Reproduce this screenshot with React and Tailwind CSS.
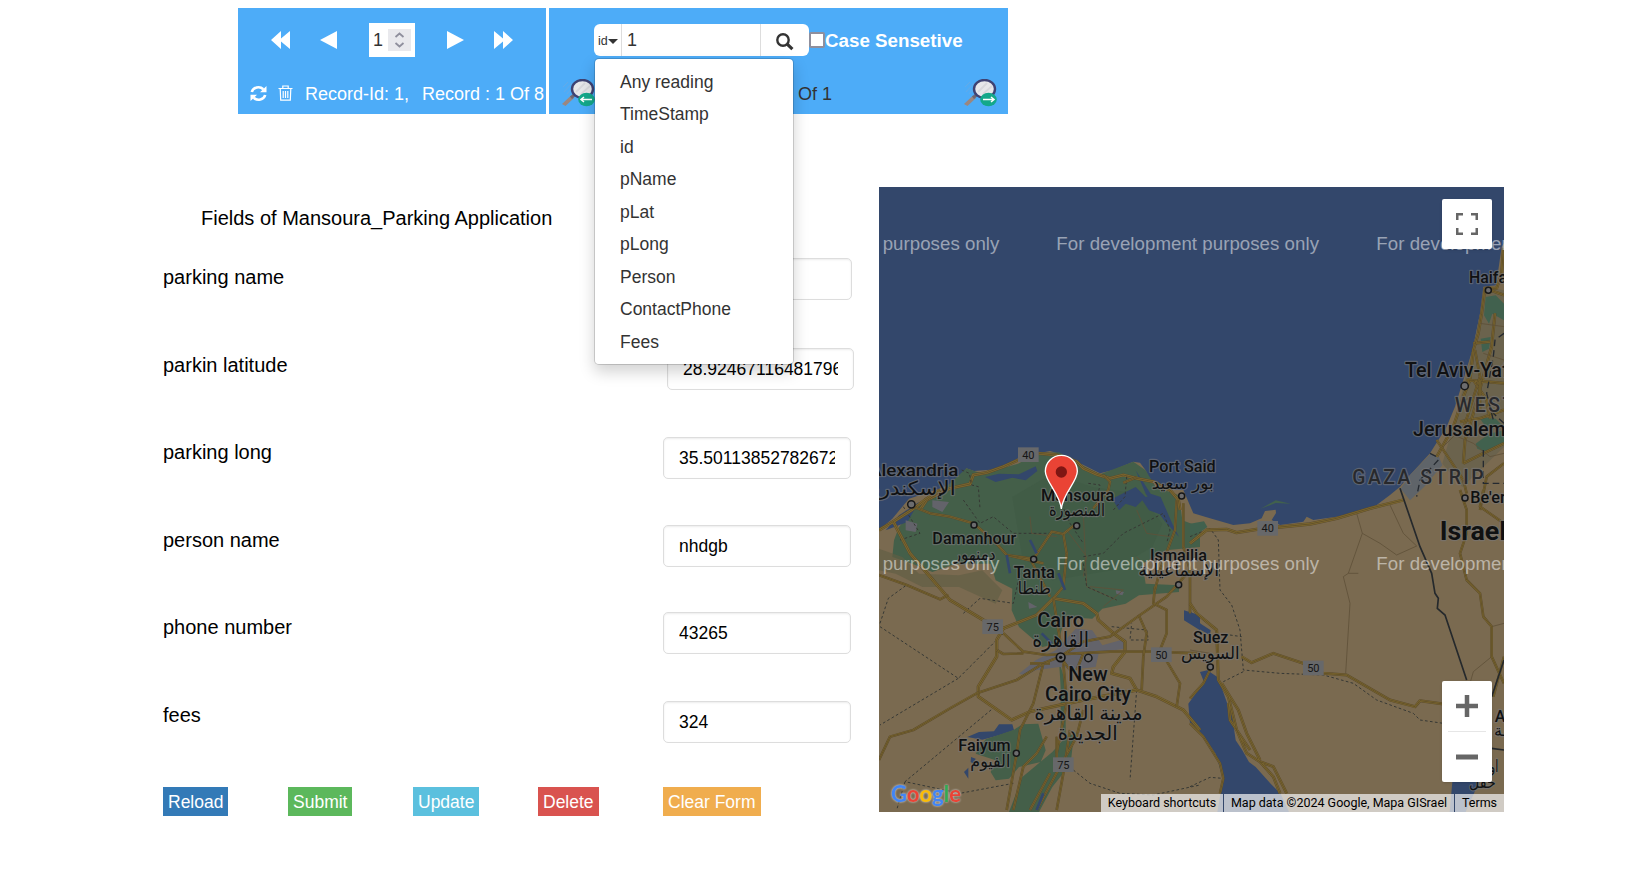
import React from "react";

const fields = [
  { label: "parking name", value: "", row: "h-[90px]", lab: "pt-[5px]", box: "w-[189px]" },
  { label: "parkin latitude", value: "28.924671164817963", row: "h-[89px]", lab: "pt-[3px]", box: "w-[187px] ml-1" },
  { label: "parking long", value: "35.501138527826725", row: "h-[88px]", lab: "pt-px", box: "w-[188px]" },
  { label: "person name", value: "nhdgb", row: "h-[87px]", lab: "pt-px", box: "w-[188px]" },
  { label: "phone number", value: "43265", row: "h-[89px]", lab: "pt-px", box: "w-[188px]" },
  { label: "fees", value: "324", row: "h-[86px]", lab: "", box: "w-[188px]" },
];

const menu = ["Any reading", "TimeStamp", "id", "pName", "pLat", "pLong", "Person", "ContactPhone", "Fees"];

const buttons = [
  ["Reload", "bg-[#337ab7]"],
  ["Submit", "bg-[#5cb85c]"],
  ["Update", "bg-[#5bc0de]"],
  ["Delete", "bg-[#d9534f]"],
  ["Clear Form", "bg-[#f0ad4e]"],
];

function Lens({ right }) {
  return (
    <svg className="h-[28px] w-[34px] shrink-0" viewBox="0 0 34 28">
      <path d="M3 13 L11 4 M6 15 L14 6 M2 8 L7 3" stroke="#74a9dc" strokeWidth="1" opacity=".6" />
      <path d="M1 25 L10 16.500 L13 19 L4.500 27Z" fill="#9b8780" />
      <path d="M9 17.500 L12 15 L14 17.500 L11 20Z" fill="#6f6672" />
      <ellipse cx="21.500" cy="10" rx="10.500" ry="9" fill="#e7e7ea" stroke="#3e4273" strokeWidth="2.400" />
      <path d="M15 13 L24 4 M20 15 L29 7" stroke="#d8d8dc" strokeWidth="1.800" />
      <ellipse cx="25.500" cy="20.500" rx="8.300" ry="6.700" fill="#14a88a" />
      <path d={right ? "M20 20.500 H31 M28 18 L31 20.500 L28 23" : "M31 20.500 H20 M23 18 L20 20.500 L23 23"} stroke="#fff" strokeWidth="1.500" fill="none" />
    </svg>
  );
}

function Road({ d, w = 8 }) {
  return (
    <g fill="none" strokeLinejoin="round">
      <path d={d} stroke="#5a4b2b" strokeWidth={w + 2} />
      <path d={d} stroke="#806a30" strokeWidth={w - 1} />
      <path d={d} stroke="#5d4d28" strokeWidth="2.500" />
    </g>
  );
}

function Minor({ d }) {
  return <path d={d} fill="none" stroke="#5f5138" strokeWidth="2.500" />;
}

function Dashed({ d }) {
  return <path d={d} fill="none" stroke="#363834" strokeWidth="3" strokeDasharray="8 7" />;
}

function Shield({ x, y, n }) {
  return (
    <g>
      <rect x={x - 31} y={y - 22} width="62" height="44" fill="#67686a" />
      <text x={x} y={y + 12} textAnchor="middle" fontSize="33" fill="#161616">{n}</text>
    </g>
  );
}

function Label({ x, y, w, size = 48, fill = "#101112", weight = 500, adjust = "spacingAndGlyphs", children }) {
  return (
    <text x={x} y={y} textLength={w} lengthAdjust={adjust} fontSize={size} fontWeight={weight} fill={fill} stroke="#77777a" strokeOpacity=".6" strokeWidth="7" strokeLinejoin="round" paintOrder="stroke">
      {children}
    </text>
  );
}

function Dot({ x, y, r = 9 }) {
  return <circle cx={x} cy={y} r={r} fill="#6c6c6e" stroke="#161718" strokeWidth="4.500" />;
}

function MapArt() {
  return (
    <svg className="block h-[625px] w-[625px]" viewBox="0 0 1875 1875" fontFamily="Roboto, 'DejaVu Sans', sans-serif">
      <rect width="1875" height="1875" fill="#33476b" />
      <path fill="#7a6a50" d="M0 1029 L40 995 L90 935 L130 922 L180 905 L238 885 L262 844 L285 852 L353 847 L417 814 L478 799 L513 792 L573 809 L603 829 L663 859 L703 849 L763 824 L783 827 L800 850 L813 880 L860 906 L913 909 L943 979 L993 994 L1063 1014 L1113 1009 L1148 994 L1158 972 L1190 968 L1191 978 L1178 999 L1203 1014 L1273 1004 L1283 989 L1303 999 L1373 989 L1433 976 L1493 954 L1533 924 L1563 899 L1593 864 L1653 799 L1703 719 L1728 659 L1753 579 L1783 479 L1803 379 L1813 299 L1850 295 L1858 249 L1868 179 L1875 169 V1875 H0Z" />
      <path fill="#445f49" d="M60 1020 L110 960 L190 910 L262 844 L310 860 L417 830 L478 799 L540 796 L603 832 L663 862 L763 824 L800 850 L830 900 L900 925 L910 1000 L963 1020 L963 1080 L860 1090 L790 1130 L800 1190 L900 1195 L900 1215 L780 1225 L740 1250 L670 1265 L640 1295 L560 1290 L535 1370 L490 1380 L420 1320 L398 1270 L400 1205 L350 1180 L335 1130 L230 1130 L160 1155 L100 1130 L40 1110 L45 1060Z" />
      <path fill="#3f5a45" d="M400 930 L520 860 L640 900 L780 920 L850 1010 L820 1080 L700 1150 L520 1180 L430 1110Z" opacity=".6" />
      <path fill="#615d44" d="M0 1085 L70 1110 L120 1160 L240 1165 L310 1150 L370 1210 L350 1250 L240 1200 L130 1200 L50 1160 L0 1150Z" opacity=".65" />
      <path fill="#33476b" d="M318 870 L360 860 L420 862 L470 838 L475 852 L440 880 L400 872 L350 885Z M700 935 L770 900 L800 930 L820 925 L850 985 L810 970 L790 940 L770 960 L740 950 L720 970Z M770 850 L815 920 L845 930 L880 1010 L900 1050 L855 1000 L800 920Z M60 985 L120 945 L85 1005 L20 1030Z M915 1270 L963 1285 L963 1330 L915 1300Z M933 1270 L965 1310 L995 1330 L993 1345 L950 1320Z" />
      <path fill="#33476b" d="M963 1455 L985 1450 L1015 1470 L1022 1485 L1045 1550 L1060 1590 L1070 1660 L1090 1690 L1110 1725 L1130 1740 L1175 1790 L1205 1820 L1230 1875 H1015 L1032 1775 L1010 1700 L983 1660 L933 1610 L928 1550 L975 1485Z" />
      <path fill="#33476b" d="M265 1650 L300 1635 L345 1633 L360 1612 H400 L405 1630 L360 1645 L310 1658Z M276 1710 L290 1715 L283 1730 L275 1725Z M255 1755 L268 1742 V1775Z M1720 1785 H1800 L1760 1875 H1712Z" />
      <path fill="#445f49" d="M320 1657 L405 1628 L430 1612 L478 1610 L500 1690 L485 1725 L420 1740 L390 1775 L350 1780 L335 1755 L350 1720 L290 1700Z M520 1695 L560 1650 L585 1640 L575 1730 L520 1800 L480 1875 H390 L430 1770Z M540 1420 L560 1490 L560 1650 L545 1640 L545 1500Z" />
      <path fill="#63636a" d="M420 1460 L470 1420 L530 1390 L590 1325 L640 1330 L670 1375 L740 1355 L740 1385 L660 1395 L650 1440 L600 1445 L540 1440 L470 1450 L440 1465Z M80 1000 L115 1010 L110 1035 L80 1030Z M160 940 L210 945 L190 975 L160 960Z M448 1245 L475 1260 L450 1265Z M710 1210 L735 1215 L730 1225 L712 1220Z" />
      <path fill="#5f6469" d="M1593 864 L1655 800 L1680 810 L1690 835 L1635 900 L1593 940 L1565 905Z" />
      <path fill="#6b634d" d="M1730 690 L1780 490 L1820 300 L1875 310 V780 L1750 900 L1690 830Z" />
      <path fill="#41614e" d="M1820 330 L1850 325 L1875 350 V400 L1840 380 L1830 410 L1815 385Z M1805 455 L1835 450 L1830 485 L1810 495Z M1790 770 L1830 740 L1875 730 V770 L1820 795 L1795 785Z M1800 690 L1850 695 L1870 715 L1820 720Z M933 1010 L975 1003 L985 1020 L960 1038 L933 1043Z M1145 965 L1190 940 L1235 950 L1190 948Z" />

      <g transform="translate(-27 -21)">
        <Road d="M150 990 L170 960 L240 925 L300 912 L310 885 L350 878 L400 860 L444 840" />
        <Road d="M505 820 L560 825 L620 845 L640 865 L680 883 L720 895 L760 885 L800 895 L850 905 L900 930 L925 960 L930 990" />
        <Dashed d="M275 870 L298 880 L305 915 L325 920 L330 985 M770 890 L765 950 L730 990 M655 910 L690 915 L680 960" />
        <Road w={6} d="M700 885 L720 905 L715 930 L670 985 M800 892 L760 908" />
      </g>

      <g transform="translate(-27 909)">
        <Minor d="M480 80 L485 130 L560 140 M640 70 L650 290 L740 330 M800 60 L830 130 L900 140 M660 290 L760 300 L700 350 M590 120 L650 200 L640 260 M800 200 L850 260" />
        <Dashed d="M100 50 L150 130 L90 150 M280 30 L330 100 L370 80 L430 130 L540 130 M640 200 L700 190 L760 130 L880 70 L900 120 L890 160 M640 220 L650 290 L740 330 M30 400 L55 325 L110 285 M30 410 L265 565 L400 430 M265 565 L30 705 M280 370 L330 325 L430 340 L450 250 M725 410 L830 420 L835 450 L780 450 L785 400 M800 600 L780 870 M610 840 L660 880 L750 910 L850 915 L990 885 M375 650 L105 875 L270 910 L430 880 M105 875 L80 960 M570 30 L600 100 L640 160" />
        <Road d="M27 120 L70 95 L125 60 L165 30 L210 0 M70 95 L120 190 L180 260 L240 330 L340 390 L400 415 L500 375 L550 325 L640 340 L680 370 L685 390 L730 430 L765 455 L765 485 L730 530 L725 550 L780 565 L800 600 L860 620 L940 660 L990 720" />
        <Road w={6} d="M27 255 L110 285 L210 328 L235 315" />
        <Road w={6} d="M130 50 L180 70 L240 80 L310 100 L370 150 L410 195 L480 205 L540 320 M410 195 L520 220 M490 208 L545 125 L580 132 L620 100 M580 132 L590 190 L580 290 L550 325 L570 450" />
        <Road d="M400 415 L380 450 L380 500 L325 590 L325 620 L425 690 L480 665 L640 630 L800 600" />
        <Road w={6} d="M400 430 L460 485 L530 495 L620 490 L720 485 L840 485 L990 490 M380 480 L400 492 L460 490 M570 500 L640 455 L720 440 L810 375 L890 320 L960 240 M570 500 L520 520 L440 570 L320 610 L240 655 L130 720 L60 740 L27 810 M520 520 L490 640 L450 720 L440 790 M580 520 L590 640 L560 790 M620 540 L640 490 M570 500 L600 540 M480 520 L540 520" />
        <Road w={6} d="M806 375 L830 430 L820 500 L815 600 M855 290 L850 340 L890 360 L890 430 L870 480 L900 530 L930 580 L920 650 M920 30 L915 120 L870 240 L855 300 M940 40 L940 170 L960 240 L960 370" />
        <Road w={6} d="M440 790 L410 960 M530 740 L500 790 L460 830 L430 960 M640 660 L620 740 L570 830 L500 960 M600 720 L580 850 L560 960 M560 740 L560 810 M540 850 L480 960" />
        <path d="M480 150 L500 190 M410 195 L420 250 M565 250 L585 300 M520 910 L500 960 M515 430 L545 460" stroke="#33476b" strokeWidth="8" fill="none" />
      </g>

      <g transform="translate(933 -21)">
        <Road w={7} d="M940 205 L935 280 L920 325 L885 325 L875 400 L865 460 L850 510 L840 600 L820 650 L790 740 L740 830 M915 400 L905 500 L880 590 L850 700 L825 780 L820 850 M885 325 L942 345 M850 490 L900 485 M830 600 L942 610 M810 725 L870 715 L942 690 M850 600 L890 660 L900 715 M942 790 L860 830 L820 850" />
        <Road w={6} d="M855 510 L870 590 L835 700 L815 760 M740 780 L820 900 L830 940 M942 850 L890 890 L870 990 M870 600 L870 690" />
        <Minor d="M870 430 L942 440 M880 520 L942 540 M780 760 L850 790 L900 830 L942 820 M820 660 L860 650 M800 760 L760 800" />
        <path d="M942 460 L915 480 L910 530 L890 640 L910 720 M942 730 L910 700 M880 810 L880 910 H942 M745 840 L690 900 L680 950 M720 820 L740 830" stroke="#252a30" strokeWidth="4" strokeDasharray="20 12" fill="none" />
      </g>

      <g transform="translate(933 909)">
        <Minor d="M500 70 L517 130 L475 250 L460 260 L480 340 L467 550 M517 130 L570 160 L620 195 L680 168 L640 130 L600 45 M475 250 H505 M942 400 L905 410 L905 500 L850 545 L840 580 M0 480 L60 490" />
        <Dashed d="M0 140 L60 115 L85 150 L90 300 L125 345 L150 420 L160 540 L270 550 L400 555 L490 580 L560 630 L670 670 L690 690 L760 700 M120 435 L155 440 M160 545 L100 575 M0 890 L60 862 L98 865" />
        <Road d="M0 160 L50 120 L110 118 L140 128 L200 118 L360 102 L440 85 L540 55 L640 30" />
        <Road w={7} d="M0 340 L20 370 L80 420 L85 570 L115 620 L140 720 L170 790 L210 815 L250 830 L290 910 M95 580 L145 660 L170 730 L210 810 M115 640 L120 690 L180 780 M210 815 L250 860 L270 910 M155 500 L185 518 L250 490 L340 520 L400 550 L470 555 L600 630 L675 650 L690 632 L760 642" />
        <Road w={6} d="M810 0 L830 60 L830 130 L810 190 L830 270 L870 310 L880 380 L905 410 L905 500 L942 580 M0 625 L40 580 L60 540 M0 700 L40 740 L90 820 L100 865 L90 910 M942 500 L910 620 M880 0 L870 50 L942 100" />
        <path d="M630 -5 L690 170 L725 250 L735 310 L745 325 L742 355 L765 375 L830 570 M942 510 L905 620 M905 775 L942 780" stroke="#25292c" strokeWidth="5" fill="none" />
      </g>

      <Shield x={448} y={803} n="40" />
      <Shield x={1166} y={1024} n="40" />
      <Shield x={341} y={1319} n="75" />
      <Shield x={847} y={1403} n="50" />
      <Shield x={1303} y={1443} n="50" />
      <Shield x={553} y={1733} n="75" />

      <Label x={-30} y={866} w={268} size={52}>Alexandria</Label>
      <Label x={-50} y={924} w={280} size={58}>الإسكندرية</Label>
      <Dot x={97} y={952} r={11} />
      <Label x={486} y={943} w={220} size={48}>Mansoura</Label>
      <Label x={510} y={988} w={168} size={52}>المنصورة</Label>
      <Dot x={593} y={1016} />
      <Label x={810} y={855} w={200} size={48}>Port Said</Label>
      <Label x={818} y={905} w={186} size={50}>بور سعيد</Label>
      <Dot x={908} y={927} />
      <Label x={160} y={1070} w={252} size={50}>Damanhour</Label>
      <Label x={224} y={1118} w={126} size={50}>دمنهور</Label>
      <Dot x={285} y={1014} />
      <Label x={404} y={1173} w={124} size={50}>Tanta</Label>
      <Label x={416} y={1220} w={100} size={52}>طنطا</Label>
      <Dot x={464} y={1117} />
      <Label x={813} y={1121} w={171} size={50}>Ismailia</Label>
      <Label x={778} y={1168} w={242} size={50}>الإسماعيلية</Label>
      <Dot x={899} y={1193} />
      <Label x={475} y={1321} w={140} size={58}>Cairo</Label>
      <Label x={460} y={1381} w={170} size={64}>القاهرة</Label>
      <circle cx="545" cy="1411" r="13" fill="#6c6c6e" stroke="#111" strokeWidth="5" />
      <circle cx="545" cy="1411" r="5" fill="#111" />
      <Dot x={628} y={1413} r={11} />
      <Label x={568} y={1481} w={118} size={58}>New</Label>
      <Label x={498} y={1541} w={258} size={58}>Cairo City</Label>
      <Label x={466} y={1600} w={325} size={60}>مدينة القاهرة</Label>
      <Label x={536} y={1660} w={180} size={60}>الجديدة</Label>
      <Label x={238} y={1692} w={157} size={50}>Faiyum</Label>
      <Label x={274} y={1740} w={120} size={50}>الفيوم</Label>
      <Dot x={412} y={1699} />
      <Label x={942} y={1369} w={106} size={50}>Suez</Label>
      <Label x={906} y={1417} w={176} size={50}>السويس</Label>
      <Dot x={994} y={1440} />
      <Label x={1770} y={289} w={114} size={50}>Haifa</Label>
      <Dot x={1828} y={310} />
      <Label x={1578} y={571} w={345} size={58}>Tel Aviv-Yafo</Label>
      <Dot x={1757} y={597} r={11} />
      <Label x={1728} y={674} w={290} size={58} adjust="spacing" fill="#28292c">WEST BA</Label>
      <Label x={1602} y={746} w={278} size={58}>Jerusalem</Label>
      <Label x={1420} y={892} w={394} size={58} adjust="spacing" fill="#28292c">GAZA STRIP</Label>
      <Dot x={1758} y={933} />
      <Label x={1774} y={948} w={250} size={48}>Be'er Sheva</Label>
      <Label x={1682} y={1060} w={200} size={80} weight={700}>Israel</Label>
      <Label x={1847} y={1604} size={48}>Aqaba</Label>
      <Label x={1845} y={1648} size={48}>ـة</Label>
      <Label x={1808} y={1755} w={50} size={50}>اول</Label>
      <Label x={1770} y={1802} w={80} size={50}>حفل</Label>

      <g fontFamily="'Liberation Sans', Arial, sans-serif" fontSize="56" fill="#ffffff" fillOpacity=".5">
        {[190, 1150].map((y) => (
          <g key={y}>
            <text x="11" y={y} textLength="350">purposes only</text>
            <text x="532" y={y} textLength="788">For development purposes only</text>
            <text x="1492" y={y} textLength="788">For development purposes only</text>
          </g>
        ))}
      </g>

      <path d="M547 966 C542 918 499 885 499 853 A48 48 0 0 1 595 853 C595 885 552 918 547 966Z" fill="#ea4335" stroke="#fff" strokeWidth="4" />
      <circle cx="547" cy="855" r="17" fill="#7f1613" />
    </svg>
  );
}

export default function App() {
  return (
    <div className="h-[888px] w-[1634px] overflow-hidden bg-white pt-2 font-['Liberation_Sans',Arial,sans-serif] text-[17.5px] leading-[25px] text-black">
      <header className="ml-[238px] flex gap-[3px]">
        <section className="h-[106px] w-[308px] bg-[#4dacf8] text-white">
          <div className="flex h-[64px] items-center pl-[33px]">
            <svg className="h-[18px] w-[19px]" viewBox="0 0 19 18" fill="#fff"><path d="M0 9 L10 0 V7.500 L19 0 V18 L10 10.500 V18Z" /></svg>
            <svg className="ml-[30px] h-[18px] w-[17px]" viewBox="0 0 17 18" fill="#fff"><path d="M0 9 L17 0 V18Z" /></svg>
            <div className="ml-[32px] flex h-[34px] w-[46px] items-center bg-white pl-[4px] text-[18px] text-[#333]">
              <span className="w-[15px]">1</span>
              <span className="flex h-[22px] w-[23px] items-center justify-center bg-[#e9e9ed]">
                <svg className="h-[16px] w-[11px]" viewBox="0 0 11 16" fill="none" stroke="#8f8f9d" strokeWidth="1.800"><path d="M1.500 5 L5.500 1.500 L9.500 5 M1.500 11 L5.500 14.500 L9.500 11" /></svg>
              </span>
            </div>
            <svg className="ml-[32px] h-[18px] w-[17px]" viewBox="0 0 17 18" fill="#fff"><path d="M0 0 L17 9 L0 18Z" /></svg>
            <svg className="ml-[30px] h-[18px] w-[19px]" viewBox="0 0 19 18" fill="#fff"><path d="M19 9 L9 0 V7.500 L0 0 V18 L9 10.500 V18Z" /></svg>
          </div>
          <div className="flex h-[42px] items-center whitespace-nowrap pl-[12px] text-[18px]">
            <svg className="h-[17px] w-[17px]" viewBox="0 0 17 17" fill="none" stroke="#fff" strokeWidth="2.600">
              <path d="M1.800 7 A6.800 6.300 0 0 1 13.300 4.200 M15.200 10 A6.800 6.300 0 0 1 3.700 12.800" />
              <path d="M16.500 1 V7.200 H10Z M.5 16 V9.800 H7Z" fill="#fff" stroke="none" />
            </svg>
            <svg className="ml-[11px] h-[16px] w-[15px]" viewBox="0 0 15 16" fill="none" stroke="#fff" strokeWidth="1.200">
              <path d="M.5 3.500 H14.500 M4.800 3 V1 H10.200 V3 M2.200 3.500 L2.700 15.200 H12.300 L12.800 3.500 M5.200 6 V13 M7.500 6 V13 M9.800 6 V13" />
            </svg>
            <span className="ml-[12px] pt-[2px]">Record-Id: 1,</span>
            <span className="ml-[13px] pt-[2px]">Record : 1 Of 8</span>
          </div>
        </section>

        <section className="h-[106px] w-[459px] bg-[#4dacf8] text-[#333]">
          <div className="flex h-[64px] items-center pl-[45px]">
            <div className="relative flex h-[32px] w-[215px] rounded-[6px] bg-white">
              <div className="flex w-[28px] items-center whitespace-nowrap border-r border-[#ddd] pl-1 pt-[3px] text-[12.5px]">
                id
                <svg className="h-[5px] w-[10px] shrink-0" viewBox="0 0 10 5" fill="#333"><path d="M0 0 H10 L5 5Z" /></svg>
              </div>
              <div className="w-[139px] border-r border-[#ddd] pl-[5px] pt-[4px] text-[18px]">1</div>
              <div className="flex flex-1 items-center justify-center pt-[3px]">
                <svg className="h-[18px] w-[18px]" viewBox="0 0 18 18" fill="none" stroke="#333"><circle cx="7" cy="7" r="5.700" strokeWidth="2.400" /><path d="M11.200 11.200 L16.400 16.200" strokeWidth="3.200" /></svg>
              </div>
              <ul className="absolute left-0 top-[34px] z-10 h-[307px] w-[200px] rounded-[5px] border border-black/15 bg-white bg-clip-padding pt-[6.500px] text-[17.5px] text-[#333] shadow-[0_7px_15px_rgba(0,0,0,0.175)]">
                {menu.map((m) => <li key={m} className="h-[32.5px] pl-[25px] pt-[4px]">{m}</li>)}
              </ul>
            </div>
            <span className="h-[16px] w-[16px] rounded-[2px] border-2 border-[#8f8f9d] bg-white" />
            <b className="text-[18.750px] text-white">Case Sensetive</b>
          </div>
          <div className="flex h-[42px] items-center pl-[12px] pr-[11px]">
            <Lens />
            <span className="ml-[188px] flex-1 pt-[2px] text-[18px]">1 Of 1</span>
            <Lens right />
          </div>
        </section>
      </header>

      <main className="ml-[163px] mt-[73px] flex">
        <section className="w-[716px]">
          <h1 className="h-[71px] pl-[38px] pt-[18px] text-[20px] leading-[26px]">Fields of Mansoura_Parking Application</h1>
          {fields.map((f) => (
            <div key={f.label} className={`flex items-start ${f.row}`}>
              <label className={`w-[500px] text-[20px] leading-[28px] ${f.lab}`}>{f.label}</label>
              <div className={`h-[42px] rounded-[5px] border border-[#ddd] px-[15px] pt-[8px] shadow-[inset_0_1px_2px_rgba(0,0,0,0.075)] ${f.box}`}>
                <div className="overflow-hidden whitespace-nowrap">{f.value}</div>
              </div>
            </div>
          ))}
          <div className="grid grid-cols-[125px_125px_125px_125px_auto] justify-items-start text-white">
            {buttons.map(([name, color]) => (
              <button key={name} className={`h-[29px] px-[5px] pt-px ${color}`}>{name}</button>
            ))}
          </div>
        </section>

        <section className="relative h-[625px] w-[625px] overflow-hidden">
          <MapArt />
          <div className="absolute right-3 top-3 flex h-[50px] w-[50px] items-center justify-center rounded-[2px] bg-white shadow">
            <svg className="h-[22px] w-[22px]" viewBox="0 0 22 22" fill="none" stroke="#666" strokeWidth="2.500"><path d="M1.250 7 V1.250 H7 M15 1.250 H20.750 V7 M20.750 15 V20.750 H15 M7 20.750 H1.250 V15" /></svg>
          </div>
          <div className="absolute bottom-[30px] right-3 flex h-[101px] w-[50px] flex-col items-center rounded-[2px] bg-white shadow">
            <svg className="mt-[14px] h-[22px] w-[22px]" viewBox="0 0 22 22" stroke="#666" strokeWidth="4.500"><path d="M11 0 V22 M0 11 H22" /></svg>
            <span className="mt-[14px] h-px w-[38px] bg-[#e6e6e6]" />
            <svg className="mt-[14px] h-[22px] w-[22px]" viewBox="0 0 22 22" stroke="#666" strokeWidth="5"><path d="M0 11 H22" /></svg>
          </div>
          <svg className="absolute bottom-0 left-2 h-[34px] w-[84px] drop-shadow-[0_0_1px_#ddd]" viewBox="0 0 84 34" fontFamily="Lato, sans-serif" fontWeight="700" fontSize="23.500">
            <text x="4" y="24" textLength="70" lengthAdjust="spacingAndGlyphs"><tspan fill="#4285f4">G</tspan><tspan fill="#ea4335">o</tspan><tspan fill="#fbbc05">o</tspan><tspan fill="#4285f4">g</tspan><tspan fill="#34a853">l</tspan><tspan fill="#ea4335">e</tspan></text>
          </svg>
          <div className="absolute bottom-0 right-0 flex h-[18px] gap-px whitespace-nowrap font-[Roboto,sans-serif] text-[12.5px] leading-[18px] text-black">
            <span className="w-[122px] bg-[#f5f5f5]/70 text-center">Keyboard shortcuts</span>
            <span className="w-[230px] bg-[#f5f5f5]/70 text-center">Map data ©2024 Google, Mapa GISrael</span>
            <span className="w-[49px] bg-[#f5f5f5]/70 text-center">Terms</span>
          </div>
        </section>
      </main>
    </div>
  );
}
